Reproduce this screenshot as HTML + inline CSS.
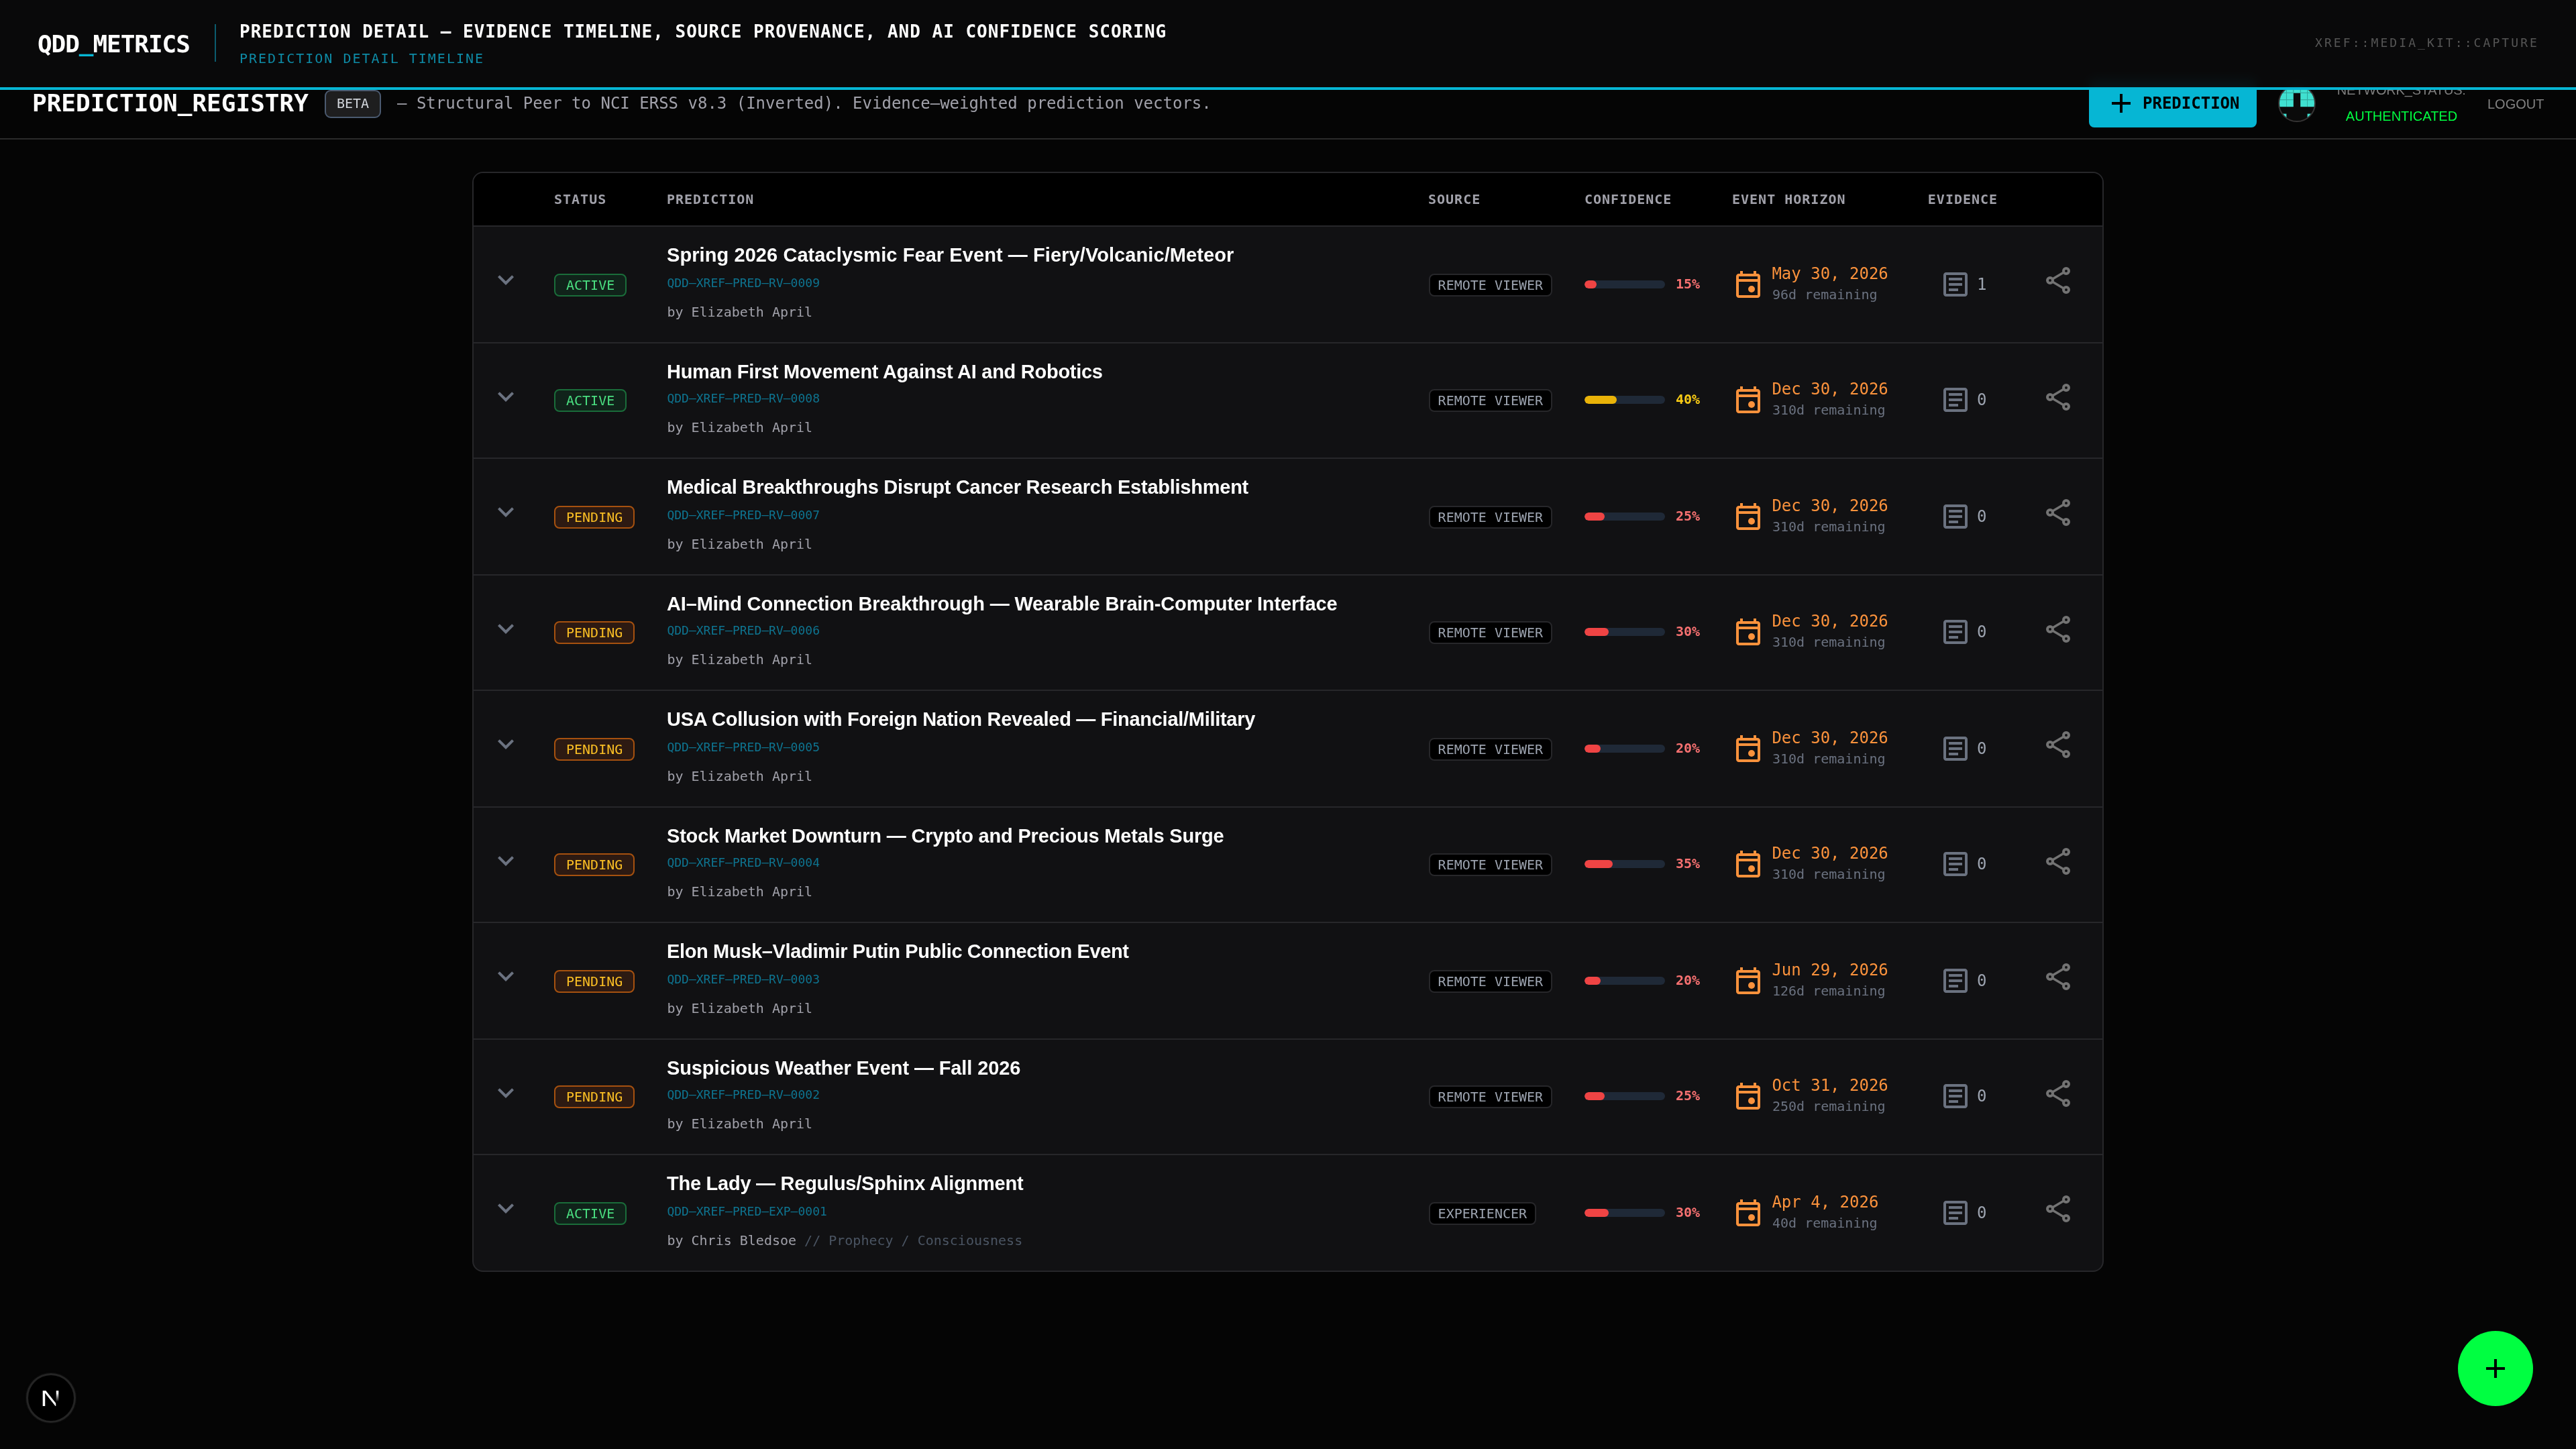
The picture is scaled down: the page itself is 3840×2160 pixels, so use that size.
<!DOCTYPE html>
<html lang="en">
<head>
<meta charset="utf-8">
<title>QDD_METRICS — Prediction Registry</title>
<style>
*{box-sizing:border-box;margin:0;padding:0}
html{zoom:2;background:#050505}
@media (max-width:1920px){html{zoom:1}}
body{width:1920px;height:1080px;position:relative;overflow:hidden;background:#050505;color:#fff;font-family:"DejaVu Sans Mono","Liberation Mono",monospace;-webkit-font-smoothing:antialiased}
#app{position:absolute;left:0;top:0;width:1920px;height:1080px;will-change:transform}
.abs,.top *,.hdr *,.row>*{position:absolute;white-space:pre}
svg{display:block;fill:currentColor}
/* page header */
.hdr{position:absolute;left:0;top:0;width:1920px;height:104px;border-bottom:1px solid #2b2b2b;background:#050505}
.h1{left:24px;top:63px;font-weight:700;font-size:18px;line-height:28px}
.beta{left:242px;top:67.200px;height:20.700px;padding:0 8px;font-size:10px;line-height:18.700px;border:1px solid #4b5a70;border-radius:4.500px;background:#1e1e1f;color:#d1d5db}
.desc{left:296px;top:68px;font-size:12px;line-height:18px;color:#a1a1aa}
.btn{left:1557px;top:59px;width:125px;height:36px;border-radius:4px;background:#06b6d4;color:#000}
.btn svg{left:12px;top:6px;width:24px;height:24px}
.btn span{left:40px;top:9px;font-weight:700;font-size:12px;line-height:18px}
.av{left:1698px;top:62.900px;width:28px;height:28px}
.ns{left:1740.400px;width:99px;text-align:center;top:60px;font:10px/14px "Liberation Sans",Arial,sans-serif;letter-spacing:-.1px;color:#7d7d7d;clip-path:inset(7px 0 0 0)}
.au{left:1740.500px;width:99px;text-align:center;top:79.500px;font:10px/14px "Liberation Sans",Arial,sans-serif;color:#00ff41}
.lo{left:1854px;top:70.300px;font:10px/14px "Liberation Sans",Arial,sans-serif;color:#808080}
/* top overlay bar */
.top{position:absolute;left:0;top:0;width:1920px;height:67px;background:rgba(10,10,11,.95);backdrop-filter:blur(4px);border-bottom:2px solid #06b6d4}
.logo{left:28px;top:19px;font-weight:700;font-size:18px;line-height:28px;letter-spacing:-.53px}
.logo b{position:relative;top:-1.100px;color:#06b6d4}
.h1 i,.ns i{position:relative;top:-.6px;font-style:normal}
.vr{left:160px;top:18px;width:1px;height:28px;background:#0b5c6e}
.t1{left:178.500px;top:15.500px;font-weight:700;font-size:13px;line-height:16px;letter-spacing:.5px}
.t2{left:178.500px;top:36.500px;font-size:10px;line-height:14px;letter-spacing:1px;color:#0e8ba6}
.xr{left:1725.500px;top:26px;font-size:9px;line-height:12px;letter-spacing:1.540px;color:#565656}
/* card */
.card{position:absolute;left:352px;top:128px;width:1216px;height:820px;border:1px solid #27272a;border-radius:8px;background:#111113;overflow:hidden}
.th{position:relative;height:39px;background:#000}
.th span{position:absolute;top:12px;font-weight:700;font-size:10px;line-height:15px;letter-spacing:.5px;color:#a1a1aa;white-space:pre}
.row{position:relative;height:87px;border-top:1px solid #27272a}
.row.e{height:86px}
.row.e>*{margin-top:-1px}
.row.e>.ti,.row.e>.chev,.row.e>.shr{margin-top:0}
.chev{left:11.900px;top:27.300px;width:24px;height:24px;color:#6b7280}
.st{left:60px;top:35px;height:17px;padding:0 8px;font-size:10px;line-height:15px;border:1px solid;border-radius:4px}
.act{color:#4ade80;border-color:#1a6d3a;background:#10231a}
.pen{color:#fbbf24;border-color:#a6510f;background:#2d1a12}
.ti{left:144px;top:11px;font:700 14.5px/20px "Liberation Sans",Arial,sans-serif;color:#fff}
.id{left:144.200px;top:35px;font-size:9px;line-height:14px;color:#0e7490}
.by{left:144.200px;top:56px;font-size:10px;line-height:15px;color:#a1a1aa}
.ex{position:static!important;color:#4b5563}
.src{left:711.800px;top:35px;height:17px;padding:0 6px;font-size:10px;line-height:15px;border:1px solid #27272a;border-radius:4px;background:#000;color:#9ca3af}
.bar{left:827.800px;top:40px;width:60px;height:6px;border-radius:3px;background:#1f2937;overflow:hidden}
.bar i{position:static!important;display:block;height:6px;border-radius:3px}
.bar .r{background:#ef4444}.bar .y{background:#eab308}
.pct{left:896px;top:35px;font-weight:700;font-size:10px;line-height:15px}
.pct.r{color:#f87171}.pct.y{color:#facc15}
.cal{left:938px;top:31px;width:24px;height:24px;color:#fb923c}
.dt{left:967.700px;top:26px;font-size:12px;line-height:18px;color:#fb923c}
.rm{left:968px;top:43px;font-size:10px;line-height:15px;color:#6b7280}
.art{left:1092.500px;top:31px;width:24px;height:24px;color:#6b7280}
.cnt{left:1120.500px;top:34px;font-size:12px;line-height:18px;color:#9ca3af}
.shr{left:1170px;top:28px;width:24px;height:24px;color:#737373}
/* floating */
.nx{position:absolute;left:21px;top:1025px;width:34px;height:34px;border-radius:50%;background:#000;box-shadow:0 0 0 1.500px #242424,0 0 1.500px 1.500px rgba(40,40,40,.5)}
.nx span{position:absolute;left:-1px;top:-1px;width:36px;text-align:center;font:16.500px/36px "Liberation Sans",Arial,sans-serif;transform:translate(-.2px,.7px) scale(1.28,1);background:linear-gradient(180deg,#fff 13.500px,rgba(255,255,255,0) 20px) 21.100px 0/15px 36px no-repeat,linear-gradient(#fff,#fff) 0 0/21.100px 36px no-repeat;-webkit-background-clip:text;background-clip:text;color:transparent}
.fab{position:absolute;left:1832px;top:992px;width:56px;height:56px;border-radius:50%;background:#00ff41;color:#000}
.fab svg{position:absolute;left:16px;top:16px;width:24px;height:24px}

</style>
</head>
<body>
<div id="app">
<div class="hdr">
<div class="h1">PREDICTION<i>_</i>REGISTRY</div>
<div class="beta">BETA</div>
<div class="desc">— Structural Peer to NCI ERSS v8.3 (Inverted). Evidence–weighted prediction vectors.</div>
<div class="btn" role="button"><svg viewBox="0 0 24 24"><path d="M19 13h-6v6h-2v-6H5v-2h6V5h2v6h6v2z"/></svg><span>PREDICTION</span></div>
<svg class="av" viewBox="0 0 28 28"><defs><clipPath id="avc"><circle cx="14" cy="14" r="13.5"/></clipPath></defs><g clip-path="url(#avc)"><rect width="28" height="28" fill="#0a0a0a"/><g fill="#40e0d0"><rect x="1.00" y="1.00" width="5.20" height="5.20"/><rect x="6.20" y="1.00" width="5.20" height="5.20"/><rect x="11.40" y="1.00" width="5.20" height="5.20"/><rect x="16.60" y="1.00" width="5.20" height="5.20"/><rect x="21.80" y="1.00" width="5.20" height="5.20"/><rect x="1.00" y="6.20" width="5.20" height="5.20"/><rect x="6.20" y="6.20" width="5.20" height="5.20"/><rect x="16.60" y="6.20" width="5.20" height="5.20"/><rect x="21.80" y="6.20" width="5.20" height="5.20"/><rect x="1.00" y="11.40" width="5.20" height="5.20"/><rect x="6.20" y="11.40" width="5.20" height="5.20"/><rect x="16.60" y="11.40" width="5.20" height="5.20"/><rect x="21.80" y="11.40" width="5.20" height="5.20"/><rect x="1.00" y="21.80" width="5.20" height="5.20"/><rect x="21.80" y="21.80" width="5.20" height="5.20"/></g><path d="M6.2 1v10.4M21.8 1v10.4M11.4 1v5.2M16.6 1v5.2M1 6.2h26M1 11.4h10.4M16.6 11.4H27" fill="none" stroke="#2fa89e" stroke-width=".5"/></g><circle cx="14" cy="14" r="13.5" fill="none" stroke="#363434" stroke-width="1"/></svg>
<div class="ns">NETWORK<i>_</i>STATUS:</div>
<div class="au">AUTHENTICATED</div>
<div class="lo" role="button">LOGOUT</div>
</div>
<div class="card" role="table">
<div class="th" role="row"><span style="left:60px">STATUS</span><span style="left:144px">PREDICTION</span><span style="left:711.500px">SOURCE</span><span style="left:828px">CONFIDENCE</span><span style="left:938px">EVENT HORIZON</span><span style="left:1083.900px">EVIDENCE</span></div>
<div class="row" role="row">
<svg class="chev" viewBox="0 0 24 24" role="img"><path d="M16.59 8.59L12 13.17 7.41 8.59 6 10l6 6 6-6z"/></svg>
<span class="st act">ACTIVE</span>
<div class="ti" style="letter-spacing:0.039px">Spring 2026 Cataclysmic Fear Event — Fiery/Volcanic/Meteor</div>
<div class="id">QDD–XREF–PRED–RV–0009</div>
<div class="by">by Elizabeth April</div>
<span class="src">REMOTE VIEWER</span>
<div class="bar"><i class="r" style="width:15%"></i></div>
<span class="pct r">15%</span>
<svg class="cal" viewBox="0 -960 960 960"><path d="M580-240q-42 0-71-29t-29-71q0-42 29-71t71-29q42 0 71 29t29 71q0 42-29 71t-71 29ZM200-80q-33 0-56.500-23.500T120-160v-560q0-33 23.500-56.500T200-800h40v-80h80v80h320v-80h80v80h40q33 0 56.500 23.500T840-720v560q0 33-23.500 56.500T760-80H200Zm0-80h560v-400H200v400Zm0-480h560v-80H200v80Z"/></svg>
<div class="dt">May 30, 2026</div>
<div class="rm">96d remaining</div>
<svg class="art" viewBox="0 0 24 24"><path d="M19 5v14H5V5h14m0-2H5c-1.100 0-2 .9-2 2v14c0 1.100.9 2 2 2h14c1.100 0 2-.9 2-2V5c0-1.100-.9-2-2-2z"/><path d="M14 17H7v-2h7v2zm3-4H7v-2h10v2zm0-4H7V7h10v2z"/></svg>
<span class="cnt">1</span>
<svg class="shr" viewBox="0 0 24 24" role="img"><g fill="none" stroke="currentColor" stroke-width="2"><circle cx="17" cy="5" r="2"/><circle cx="5" cy="12" r="2"/><circle cx="17" cy="19" r="2"/><path stroke-width="1.75" d="M6.800 10.950L15.200 6.050M6.800 13.050L15.200 17.950"/></g></svg>
</div>
<div class="row e" role="row">
<svg class="chev" viewBox="0 0 24 24" role="img"><path d="M16.59 8.59L12 13.17 7.41 8.59 6 10l6 6 6-6z"/></svg>
<span class="st act">ACTIVE</span>
<div class="ti" style="letter-spacing:-0.136px">Human First Movement Against AI and Robotics</div>
<div class="id">QDD–XREF–PRED–RV–0008</div>
<div class="by">by Elizabeth April</div>
<span class="src">REMOTE VIEWER</span>
<div class="bar"><i class="y" style="width:40%"></i></div>
<span class="pct y">40%</span>
<svg class="cal" viewBox="0 -960 960 960"><path d="M580-240q-42 0-71-29t-29-71q0-42 29-71t71-29q42 0 71 29t29 71q0 42-29 71t-71 29ZM200-80q-33 0-56.500-23.500T120-160v-560q0-33 23.500-56.500T200-800h40v-80h80v80h320v-80h80v80h40q33 0 56.500 23.500T840-720v560q0 33-23.500 56.500T760-80H200Zm0-80h560v-400H200v400Zm0-480h560v-80H200v80Z"/></svg>
<div class="dt">Dec 30, 2026</div>
<div class="rm">310d remaining</div>
<svg class="art" viewBox="0 0 24 24"><path d="M19 5v14H5V5h14m0-2H5c-1.100 0-2 .9-2 2v14c0 1.100.9 2 2 2h14c1.100 0 2-.9 2-2V5c0-1.100-.9-2-2-2z"/><path d="M14 17H7v-2h7v2zm3-4H7v-2h10v2zm0-4H7V7h10v2z"/></svg>
<span class="cnt">0</span>
<svg class="shr" viewBox="0 0 24 24" role="img"><g fill="none" stroke="currentColor" stroke-width="2"><circle cx="17" cy="5" r="2"/><circle cx="5" cy="12" r="2"/><circle cx="17" cy="19" r="2"/><path stroke-width="1.75" d="M6.800 10.950L15.200 6.050M6.800 13.050L15.200 17.950"/></g></svg>
</div>
<div class="row" role="row">
<svg class="chev" viewBox="0 0 24 24" role="img"><path d="M16.59 8.59L12 13.17 7.41 8.59 6 10l6 6 6-6z"/></svg>
<span class="st pen">PENDING</span>
<div class="ti" style="letter-spacing:-0.123px">Medical Breakthroughs Disrupt Cancer Research Establishment</div>
<div class="id">QDD–XREF–PRED–RV–0007</div>
<div class="by">by Elizabeth April</div>
<span class="src">REMOTE VIEWER</span>
<div class="bar"><i class="r" style="width:25%"></i></div>
<span class="pct r">25%</span>
<svg class="cal" viewBox="0 -960 960 960"><path d="M580-240q-42 0-71-29t-29-71q0-42 29-71t71-29q42 0 71 29t29 71q0 42-29 71t-71 29ZM200-80q-33 0-56.500-23.500T120-160v-560q0-33 23.500-56.500T200-800h40v-80h80v80h320v-80h80v80h40q33 0 56.500 23.500T840-720v560q0 33-23.500 56.500T760-80H200Zm0-80h560v-400H200v400Zm0-480h560v-80H200v80Z"/></svg>
<div class="dt">Dec 30, 2026</div>
<div class="rm">310d remaining</div>
<svg class="art" viewBox="0 0 24 24"><path d="M19 5v14H5V5h14m0-2H5c-1.100 0-2 .9-2 2v14c0 1.100.9 2 2 2h14c1.100 0 2-.9 2-2V5c0-1.100-.9-2-2-2z"/><path d="M14 17H7v-2h7v2zm3-4H7v-2h10v2zm0-4H7V7h10v2z"/></svg>
<span class="cnt">0</span>
<svg class="shr" viewBox="0 0 24 24" role="img"><g fill="none" stroke="currentColor" stroke-width="2"><circle cx="17" cy="5" r="2"/><circle cx="5" cy="12" r="2"/><circle cx="17" cy="19" r="2"/><path stroke-width="1.75" d="M6.800 10.950L15.200 6.050M6.800 13.050L15.200 17.950"/></g></svg>
</div>
<div class="row e" role="row">
<svg class="chev" viewBox="0 0 24 24" role="img"><path d="M16.59 8.59L12 13.17 7.41 8.59 6 10l6 6 6-6z"/></svg>
<span class="st pen">PENDING</span>
<div class="ti" style="letter-spacing:-0.077px">AI–Mind Connection Breakthrough — Wearable Brain-Computer Interface</div>
<div class="id">QDD–XREF–PRED–RV–0006</div>
<div class="by">by Elizabeth April</div>
<span class="src">REMOTE VIEWER</span>
<div class="bar"><i class="r" style="width:30%"></i></div>
<span class="pct r">30%</span>
<svg class="cal" viewBox="0 -960 960 960"><path d="M580-240q-42 0-71-29t-29-71q0-42 29-71t71-29q42 0 71 29t29 71q0 42-29 71t-71 29ZM200-80q-33 0-56.500-23.500T120-160v-560q0-33 23.500-56.500T200-800h40v-80h80v80h320v-80h80v80h40q33 0 56.500 23.500T840-720v560q0 33-23.500 56.500T760-80H200Zm0-80h560v-400H200v400Zm0-480h560v-80H200v80Z"/></svg>
<div class="dt">Dec 30, 2026</div>
<div class="rm">310d remaining</div>
<svg class="art" viewBox="0 0 24 24"><path d="M19 5v14H5V5h14m0-2H5c-1.100 0-2 .9-2 2v14c0 1.100.9 2 2 2h14c1.100 0 2-.9 2-2V5c0-1.100-.9-2-2-2z"/><path d="M14 17H7v-2h7v2zm3-4H7v-2h10v2zm0-4H7V7h10v2z"/></svg>
<span class="cnt">0</span>
<svg class="shr" viewBox="0 0 24 24" role="img"><g fill="none" stroke="currentColor" stroke-width="2"><circle cx="17" cy="5" r="2"/><circle cx="5" cy="12" r="2"/><circle cx="17" cy="19" r="2"/><path stroke-width="1.75" d="M6.800 10.950L15.200 6.050M6.800 13.050L15.200 17.950"/></g></svg>
</div>
<div class="row" role="row">
<svg class="chev" viewBox="0 0 24 24" role="img"><path d="M16.59 8.59L12 13.17 7.41 8.59 6 10l6 6 6-6z"/></svg>
<span class="st pen">PENDING</span>
<div class="ti" style="letter-spacing:-0.141px">USA Collusion with Foreign Nation Revealed — Financial/Military</div>
<div class="id">QDD–XREF–PRED–RV–0005</div>
<div class="by">by Elizabeth April</div>
<span class="src">REMOTE VIEWER</span>
<div class="bar"><i class="r" style="width:20%"></i></div>
<span class="pct r">20%</span>
<svg class="cal" viewBox="0 -960 960 960"><path d="M580-240q-42 0-71-29t-29-71q0-42 29-71t71-29q42 0 71 29t29 71q0 42-29 71t-71 29ZM200-80q-33 0-56.500-23.500T120-160v-560q0-33 23.500-56.500T200-800h40v-80h80v80h320v-80h80v80h40q33 0 56.500 23.500T840-720v560q0 33-23.500 56.500T760-80H200Zm0-80h560v-400H200v400Zm0-480h560v-80H200v80Z"/></svg>
<div class="dt">Dec 30, 2026</div>
<div class="rm">310d remaining</div>
<svg class="art" viewBox="0 0 24 24"><path d="M19 5v14H5V5h14m0-2H5c-1.100 0-2 .9-2 2v14c0 1.100.9 2 2 2h14c1.100 0 2-.9 2-2V5c0-1.100-.9-2-2-2z"/><path d="M14 17H7v-2h7v2zm3-4H7v-2h10v2zm0-4H7V7h10v2z"/></svg>
<span class="cnt">0</span>
<svg class="shr" viewBox="0 0 24 24" role="img"><g fill="none" stroke="currentColor" stroke-width="2"><circle cx="17" cy="5" r="2"/><circle cx="5" cy="12" r="2"/><circle cx="17" cy="19" r="2"/><path stroke-width="1.75" d="M6.800 10.950L15.200 6.050M6.800 13.050L15.200 17.950"/></g></svg>
</div>
<div class="row e" role="row">
<svg class="chev" viewBox="0 0 24 24" role="img"><path d="M16.59 8.59L12 13.17 7.41 8.59 6 10l6 6 6-6z"/></svg>
<span class="st pen">PENDING</span>
<div class="ti" style="letter-spacing:-0.095px">Stock Market Downturn — Crypto and Precious Metals Surge</div>
<div class="id">QDD–XREF–PRED–RV–0004</div>
<div class="by">by Elizabeth April</div>
<span class="src">REMOTE VIEWER</span>
<div class="bar"><i class="r" style="width:35%"></i></div>
<span class="pct r">35%</span>
<svg class="cal" viewBox="0 -960 960 960"><path d="M580-240q-42 0-71-29t-29-71q0-42 29-71t71-29q42 0 71 29t29 71q0 42-29 71t-71 29ZM200-80q-33 0-56.500-23.500T120-160v-560q0-33 23.500-56.500T200-800h40v-80h80v80h320v-80h80v80h40q33 0 56.500 23.500T840-720v560q0 33-23.500 56.500T760-80H200Zm0-80h560v-400H200v400Zm0-480h560v-80H200v80Z"/></svg>
<div class="dt">Dec 30, 2026</div>
<div class="rm">310d remaining</div>
<svg class="art" viewBox="0 0 24 24"><path d="M19 5v14H5V5h14m0-2H5c-1.100 0-2 .9-2 2v14c0 1.100.9 2 2 2h14c1.100 0 2-.9 2-2V5c0-1.100-.9-2-2-2z"/><path d="M14 17H7v-2h7v2zm3-4H7v-2h10v2zm0-4H7V7h10v2z"/></svg>
<span class="cnt">0</span>
<svg class="shr" viewBox="0 0 24 24" role="img"><g fill="none" stroke="currentColor" stroke-width="2"><circle cx="17" cy="5" r="2"/><circle cx="5" cy="12" r="2"/><circle cx="17" cy="19" r="2"/><path stroke-width="1.75" d="M6.800 10.950L15.200 6.050M6.800 13.050L15.200 17.950"/></g></svg>
</div>
<div class="row" role="row">
<svg class="chev" viewBox="0 0 24 24" role="img"><path d="M16.59 8.59L12 13.17 7.41 8.59 6 10l6 6 6-6z"/></svg>
<span class="st pen">PENDING</span>
<div class="ti" style="letter-spacing:-0.178px">Elon Musk–Vladimir Putin Public Connection Event</div>
<div class="id">QDD–XREF–PRED–RV–0003</div>
<div class="by">by Elizabeth April</div>
<span class="src">REMOTE VIEWER</span>
<div class="bar"><i class="r" style="width:20%"></i></div>
<span class="pct r">20%</span>
<svg class="cal" viewBox="0 -960 960 960"><path d="M580-240q-42 0-71-29t-29-71q0-42 29-71t71-29q42 0 71 29t29 71q0 42-29 71t-71 29ZM200-80q-33 0-56.500-23.500T120-160v-560q0-33 23.500-56.500T200-800h40v-80h80v80h320v-80h80v80h40q33 0 56.500 23.500T840-720v560q0 33-23.500 56.500T760-80H200Zm0-80h560v-400H200v400Zm0-480h560v-80H200v80Z"/></svg>
<div class="dt">Jun 29, 2026</div>
<div class="rm">126d remaining</div>
<svg class="art" viewBox="0 0 24 24"><path d="M19 5v14H5V5h14m0-2H5c-1.100 0-2 .9-2 2v14c0 1.100.9 2 2 2h14c1.100 0 2-.9 2-2V5c0-1.100-.9-2-2-2z"/><path d="M14 17H7v-2h7v2zm3-4H7v-2h10v2zm0-4H7V7h10v2z"/></svg>
<span class="cnt">0</span>
<svg class="shr" viewBox="0 0 24 24" role="img"><g fill="none" stroke="currentColor" stroke-width="2"><circle cx="17" cy="5" r="2"/><circle cx="5" cy="12" r="2"/><circle cx="17" cy="19" r="2"/><path stroke-width="1.75" d="M6.800 10.950L15.200 6.050M6.800 13.050L15.200 17.950"/></g></svg>
</div>
<div class="row e" role="row">
<svg class="chev" viewBox="0 0 24 24" role="img"><path d="M16.59 8.59L12 13.17 7.41 8.59 6 10l6 6 6-6z"/></svg>
<span class="st pen">PENDING</span>
<div class="ti" style="letter-spacing:-0.057px">Suspicious Weather Event — Fall 2026</div>
<div class="id">QDD–XREF–PRED–RV–0002</div>
<div class="by">by Elizabeth April</div>
<span class="src">REMOTE VIEWER</span>
<div class="bar"><i class="r" style="width:25%"></i></div>
<span class="pct r">25%</span>
<svg class="cal" viewBox="0 -960 960 960"><path d="M580-240q-42 0-71-29t-29-71q0-42 29-71t71-29q42 0 71 29t29 71q0 42-29 71t-71 29ZM200-80q-33 0-56.500-23.500T120-160v-560q0-33 23.500-56.500T200-800h40v-80h80v80h320v-80h80v80h40q33 0 56.500 23.500T840-720v560q0 33-23.500 56.500T760-80H200Zm0-80h560v-400H200v400Zm0-480h560v-80H200v80Z"/></svg>
<div class="dt">Oct 31, 2026</div>
<div class="rm">250d remaining</div>
<svg class="art" viewBox="0 0 24 24"><path d="M19 5v14H5V5h14m0-2H5c-1.100 0-2 .9-2 2v14c0 1.100.9 2 2 2h14c1.100 0 2-.9 2-2V5c0-1.100-.9-2-2-2z"/><path d="M14 17H7v-2h7v2zm3-4H7v-2h10v2zm0-4H7V7h10v2z"/></svg>
<span class="cnt">0</span>
<svg class="shr" viewBox="0 0 24 24" role="img"><g fill="none" stroke="currentColor" stroke-width="2"><circle cx="17" cy="5" r="2"/><circle cx="5" cy="12" r="2"/><circle cx="17" cy="19" r="2"/><path stroke-width="1.75" d="M6.800 10.950L15.200 6.050M6.800 13.050L15.200 17.950"/></g></svg>
</div>
<div class="row" role="row">
<svg class="chev" viewBox="0 0 24 24" role="img"><path d="M16.59 8.59L12 13.17 7.41 8.59 6 10l6 6 6-6z"/></svg>
<span class="st act">ACTIVE</span>
<div class="ti" style="letter-spacing:-0.128px">The Lady — Regulus/Sphinx Alignment</div>
<div class="id">QDD–XREF–PRED–EXP–0001</div>
<div class="by">by Chris Bledsoe<span class="ex"> // Prophecy / Consciousness</span></div>
<span class="src">EXPERIENCER</span>
<div class="bar"><i class="r" style="width:30%"></i></div>
<span class="pct r">30%</span>
<svg class="cal" viewBox="0 -960 960 960"><path d="M580-240q-42 0-71-29t-29-71q0-42 29-71t71-29q42 0 71 29t29 71q0 42-29 71t-71 29ZM200-80q-33 0-56.500-23.500T120-160v-560q0-33 23.500-56.500T200-800h40v-80h80v80h320v-80h80v80h40q33 0 56.500 23.500T840-720v560q0 33-23.500 56.500T760-80H200Zm0-80h560v-400H200v400Zm0-480h560v-80H200v80Z"/></svg>
<div class="dt">Apr 4, 2026</div>
<div class="rm">40d remaining</div>
<svg class="art" viewBox="0 0 24 24"><path d="M19 5v14H5V5h14m0-2H5c-1.100 0-2 .9-2 2v14c0 1.100.9 2 2 2h14c1.100 0 2-.9 2-2V5c0-1.100-.9-2-2-2z"/><path d="M14 17H7v-2h7v2zm3-4H7v-2h10v2zm0-4H7V7h10v2z"/></svg>
<span class="cnt">0</span>
<svg class="shr" viewBox="0 0 24 24" role="img"><g fill="none" stroke="currentColor" stroke-width="2"><circle cx="17" cy="5" r="2"/><circle cx="5" cy="12" r="2"/><circle cx="17" cy="19" r="2"/><path stroke-width="1.75" d="M6.800 10.950L15.200 6.050M6.800 13.050L15.200 17.950"/></g></svg>
</div>

</div>
<div class="top" role="banner">
<div class="logo">QDD<b>_</b>METRICS</div>
<div class="vr"></div>
<div class="t1">PREDICTION DETAIL — EVIDENCE TIMELINE, SOURCE PROVENANCE, AND AI CONFIDENCE SCORING</div>
<div class="t2">PREDICTION DETAIL TIMELINE</div>
<div class="xr">XREF::MEDIA_KIT::CAPTURE</div>
</div>
<div class="nx"><span>N</span></div>
<div class="fab" role="button"><svg viewBox="0 0 24 24"><path d="M19 13h-6v6h-2v-6H5v-2h6V5h2v6h6v2z"/></svg></div>
</div>
<script>(function(){var w=window.innerWidth||3840;document.documentElement.style.zoom=(w/1920);})();</script>
</body>
</html>
